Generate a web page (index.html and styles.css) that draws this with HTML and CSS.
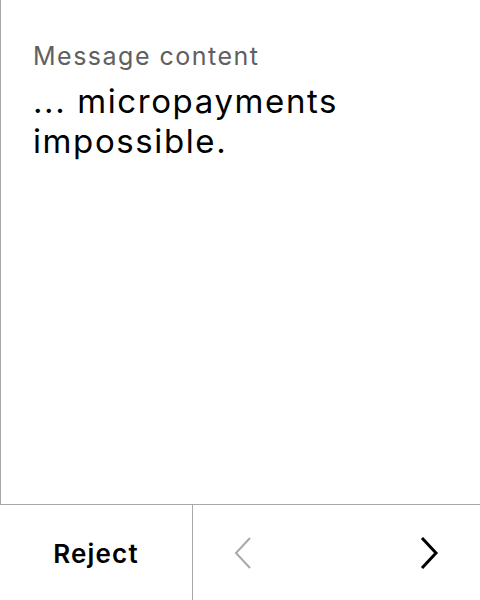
FILE: index.html
```html
<!DOCTYPE html>
<html>
<head>
<meta charset="utf-8">
<link rel="stylesheet" href="styles.css">
</head>
<body>
<div class="screen">
  <div class="content">
    <div class="label">Message content</div>
    <div class="message">... micropayments impossible.</div>
  </div>
  <div class="actions">
    <div class="reject">Reject</div>
    <div class="nav">
      <svg class="chev prev" width="20" height="32" viewBox="0 0 20 32"><path d="M17 1 L3 16 L17 31" fill="none" stroke="#a9a9a9" stroke-width="2"/></svg>
      <svg class="chev next" width="20" height="32" viewBox="0 0 20 32"><path d="M2 1 L16 16 L2 31" fill="none" stroke="#000" stroke-width="3"/></svg>
    </div>
  </div>
</div>
</body>
</html>
```
FILE: styles.css
```css
html, body {
  margin: 0;
  padding: 0;
  background: #fff;
}
.screen {
  width: 480px;
  height: 600px;
  display: flex;
  flex-direction: column;
  font-family: Inter, "Noto Sans", sans-serif;
  color: #000;
}
.content {
  flex: 1;
  border-left: 1px solid #a8a8a8;
  border-bottom: 1px solid #a8a8a8;
  padding: 40px 24px 0 32px;
}
.label {
  font-size: 25px;
  line-height: 32px;
  letter-spacing: 1.5px;
  color: #606060;
}
.message {
  font-size: 33px;
  line-height: 40px;
  letter-spacing: 1.6px;
  margin-top: 9px;
}
.actions {
  height: 95px;
  display: flex;
}
.reject {
  width: 193px;
  border-right: 1px solid #a8a8a8;
  display: flex;
  align-items: center;
  justify-content: center;
  font-size: 26px;
  font-weight: 600;
  letter-spacing: 1.2px;
  padding-top: 2px;
  box-sizing: border-box;
}
.nav {
  flex: 1;
  display: flex;
  align-items: center;
  justify-content: space-between;
  padding: 0 40px;
}
```
